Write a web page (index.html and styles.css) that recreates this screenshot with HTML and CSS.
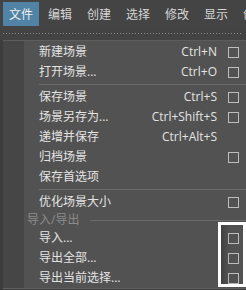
FILE: index.html
```html
<!DOCTYPE html>
<html lang="zh">
<head>
<meta charset="utf-8">
<link rel="stylesheet" href="styles.css">
</head>
<body>
<div class="menubar">
  <span class="mi active">文件</span><span class="mi">编辑</span><span class="mi">创建</span><span class="mi">选择</span><span class="mi">修改</span><span class="mi">显示</span><span class="mi">创建</span>
</div>
<div class="tearoff"><div class="dots"></div></div>
<div class="panel">
  <div class="iconcol"></div>
  <div class="items">
    <div class="row"><span class="label">新建场景</span><span class="sc">Ctrl+N</span><span class="cb"></span></div>
    <div class="row"><span class="label">打开场景...</span><span class="sc">Ctrl+O</span><span class="cb"></span></div>
    <div class="sep"></div>
    <div class="row"><span class="label">保存场景</span><span class="sc">Ctrl+S</span><span class="cb"></span></div>
    <div class="row"><span class="label">场景另存为...</span><span class="sc">Ctrl+Shift+S</span><span class="cb"></span></div>
    <div class="row"><span class="label">递增并保存</span><span class="sc">Ctrl+Alt+S</span><span class="cb none"></span></div>
    <div class="row"><span class="label">归档场景</span><span class="sc"></span><span class="cb"></span></div>
    <div class="row"><span class="label">保存首选项</span><span class="sc"></span><span class="cb none"></span></div>
    <div class="sep"></div>
    <div class="row"><span class="label">优化场景大小</span><span class="sc"></span><span class="cb"></span></div>
    <div class="group">导入/导出</div>
    <div class="row"><span class="label">导入...</span><span class="sc"></span><span class="cb"></span></div>
    <div class="row"><span class="label">导出全部...</span><span class="sc"></span><span class="cb"></span></div>
    <div class="row"><span class="label">导出当前选择...</span><span class="sc"></span><span class="cb"></span></div>
  </div>
</div>
<div class="annot"></div>
</body>
</html>
```
FILE: styles.css
```css
html, body {
  margin: 0;
  padding: 0;
  background: #3d3d3d;
  width: 246px;
  height: 290px;
  overflow: hidden;
  font-family: "Open Sans", "Noto Sans CJK SC", sans-serif;
  font-size: 12px;
  color: #e4e4e4;
}

.menubar {
  height: 26px;
  box-sizing: border-box;
  padding: 2px 0 0 3px;
  background: #444444;
  display: flex;
  white-space: nowrap;
  overflow: hidden;
}

.mi {
  height: 24px;
  line-height: 24px;
  padding: 0 6px;
  margin-right: 3px;
  color: #d6d6d6;
  font-family: "Noto Sans CJK SC", sans-serif;
}

.mi.active {
  background: #5183a6;
  color: #eeeeee;
}

.tearoff {
  height: 14px;
  background: #434343;
  padding: 7px 5px 0 3px;
  box-sizing: border-box;
}

.dots {
  height: 1px;
  background-image: linear-gradient(to right, #8c8c8c 1px, transparent 1px);
  background-size: 3px 1px;
}

.panel {
  margin-left: 3px;
  display: grid;
  grid-template-columns: 21px 1fr;
  border-top: 1px solid #5d5d5d;
  border-bottom: 1px solid #606060;
  background: #525252;
}

.iconcol {
  background: #464646;
}

.items {
  padding-top: 1px;
}

.row {
  display: flex;
  align-items: center;
  height: 20px;
  padding-left: 15px;
  line-height: 20px;
  white-space: nowrap;
}

.label {
  flex: 1;
}

.sc {
  text-align: right;
}

.cb {
  width: 11px;
  height: 11px;
  box-sizing: border-box;
  border: 1px solid #bdbdbd;
  margin-left: 11px;
  margin-right: 7px;
}

.cb.none {
  border: none;
}

.sep {
  height: 5px;
  margin-left: 15px;
  display: flex;
  align-items: center;
}

.sep::before {
  content: "";
  flex: 1;
  height: 1px;
  background: #6b6b6b;
}

.group {
  height: 16px;
  display: flex;
  align-items: center;
  padding-left: 3px;
  color: #8c8c8c;
  line-height: 16px;
}

.group::after {
  content: "";
  flex: 1;
  height: 1px;
  margin-left: 11px;
  background: #6a6a6a;
}

.annot {
  position: absolute;
  left: 218px;
  top: 222px;
  width: 28px;
  height: 65px;
  box-sizing: border-box;
  border: 3px solid #ffffff;
  box-shadow: inset 6px 0 6px -3px rgba(0, 0, 0, 0.25);
}
```
